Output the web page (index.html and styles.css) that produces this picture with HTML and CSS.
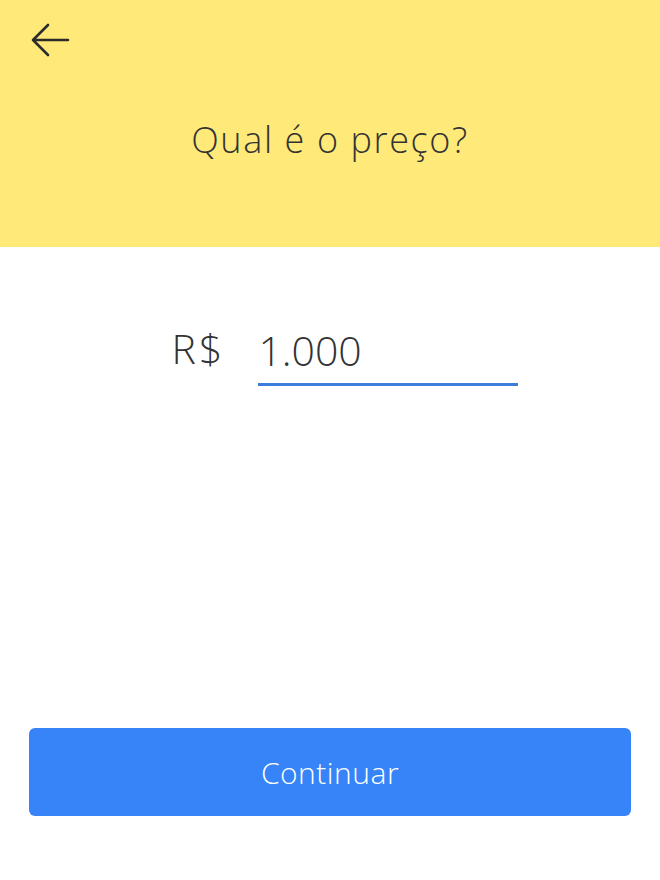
FILE: index.html
```html
<!DOCTYPE html>
<html lang="pt-BR">
<head>
  <meta charset="UTF-8" />
  <meta name="viewport" content="width=device-width, initial-scale=1.0" />
  <title>Qual é o preço?</title>
  <link rel="stylesheet" href="styles.css">
</head>
<body>
  <div class="screen">
    <header class="top-bar">
      <button class="back-btn" aria-label="Voltar">
        <svg width="42" height="36" viewBox="0 0 42 36">
          <path d="M39 18 H4 M19 3 L4 18 L19 33" fill="none" stroke="#2b2b2b" stroke-width="2.6" stroke-linecap="round" stroke-linejoin="round"/>
        </svg>
      </button>
      <h1 class="title">Qual é o preço?</h1>
    </header>

    <main class="price-form">
      <div class="price-row">
        <span class="currency">R$</span>
        <input class="price-input" type="text" value="1.000">
      </div>
    </main>

    <div class="footer">
      <button class="continue-btn">Continuar</button>
    </div>
  </div>
</body>
</html>
```

FILE: styles.css
```css
body {
  font-family: 'Open Sans', Lato, sans-serif;
  background-color: #fff;
  color: #333;
  margin: 0;
}

.screen {
  height: 880px;
  display: flex;
  flex-direction: column;
}

.top-bar {
  background-color: #fee979;
  height: 247px;
  display: flex;
  flex-direction: column;
  box-sizing: border-box;
  padding: 22px 0 0 29px;
}

.back-btn {
  background: none;
  border: none;
  padding: 0;
  width: 42px;
  height: 36px;
  cursor: pointer;
}

.back-btn svg {
  display: block;
}

.title {
  margin: 57px 29px 0 0;
  text-align: center;
  font-size: 36px;
  font-weight: 300;
  letter-spacing: 1.6px;
  color: #333;
}

.price-form {
  flex: 1;
  padding-top: 76px;
}

.price-row {
  display: flex;
  justify-content: center;
  align-items: flex-end;
  gap: 36px;
  padding-left: 30px;
}

.currency {
  font-size: 41px;
  font-weight: 300;
  letter-spacing: 3px;
  color: #333;
  line-height: 50px;
  padding-bottom: 13px;
  margin-right: -3px;
}

.price-input {
  width: 260px;
  border: none;
  border-bottom: 3px solid #3b7ddb;
  font-family: inherit;
  font-size: 41px;
  font-weight: 300;
  color: #333;
  padding: 0 0 8px 0;
  line-height: 50px;
  outline: none;
  background: none;
}

.footer {
  padding: 0 29px 64px 29px;
}

.continue-btn {
  width: 100%;
  height: 88px;
  background-color: #3784f9;
  border: none;
  border-radius: 6px;
  color: #fff;
  font-family: inherit;
  font-size: 30px;
  font-weight: 300;
  letter-spacing: 0.5px;
  cursor: pointer;
}
```
